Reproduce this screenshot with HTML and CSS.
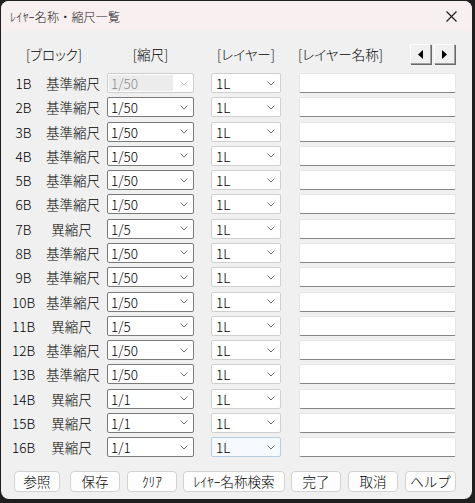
FILE: index.html
```html
<!DOCTYPE html>
<html lang="ja">
<head>
<meta charset="utf-8">
<title>レイヤー名称・縮尺一覧</title>
<link rel="stylesheet" href="styles.css">
</head>
<body>
<div class="win">
  <div class="titlebar">
    <span class="title">ﾚｲﾔｰ名称・縮尺一覧</span>
    <span class="close"><svg width="11" height="11" viewBox="0 0 11 11"><path d="M0.5 0.5 L10.5 10.5 M10.5 0.5 L0.5 10.5" stroke="#1a1a1a" stroke-width="1.1" fill="none"/></svg></span>
  </div>
  <div class="content">
    <div class="hdr">
      <div class="h-block">[ブロック]</div>
      <div class="h-scale">[縮尺]</div>
      <div class="h-layer">[レイヤー]</div>
      <div class="h-name">[レイヤー名称]</div>
      <div class="arrows">
        <div class="abtn"><svg width="5" height="9" viewBox="0 0 5 9"><path d="M5 0 L0 4.5 L5 9 Z" fill="#000"/></svg></div>
        <div class="abtn"><svg width="5" height="9" viewBox="0 0 5 9"><path d="M0 0 L5 4.5 L0 9 Z" fill="#000"/></svg></div>
      </div>
    </div>
    <div class="rows">
      <div class="row"><div class="c-block">1B</div><div class="c-type">基準縮尺</div><div class="sel scale disabled"><span class="val">1/50</span><svg class="chev" width="8" height="5" viewBox="0 0 8 5"><path d="M0.5 0.5 L4 4 L7.5 0.5" stroke="#c4c4c4" fill="none"/></svg></div><div class="sel layer"><span class="val">1L</span><svg class="chev" width="8" height="5" viewBox="0 0 8 5"><path d="M0.5 0.5 L4 4 L7.5 0.5" stroke="#6e6e6e" fill="none"/></svg></div><div class="txt"></div></div>
      <div class="row"><div class="c-block">2B</div><div class="c-type">基準縮尺</div><div class="sel scale"><span class="val">1/50</span><svg class="chev" width="8" height="5" viewBox="0 0 8 5"><path d="M0.5 0.5 L4 4 L7.5 0.5" stroke="#6e6e6e" fill="none"/></svg></div><div class="sel layer"><span class="val">1L</span><svg class="chev" width="8" height="5" viewBox="0 0 8 5"><path d="M0.5 0.5 L4 4 L7.5 0.5" stroke="#6e6e6e" fill="none"/></svg></div><div class="txt"></div></div>
      <div class="row"><div class="c-block">3B</div><div class="c-type">基準縮尺</div><div class="sel scale"><span class="val">1/50</span><svg class="chev" width="8" height="5" viewBox="0 0 8 5"><path d="M0.5 0.5 L4 4 L7.5 0.5" stroke="#6e6e6e" fill="none"/></svg></div><div class="sel layer"><span class="val">1L</span><svg class="chev" width="8" height="5" viewBox="0 0 8 5"><path d="M0.5 0.5 L4 4 L7.5 0.5" stroke="#6e6e6e" fill="none"/></svg></div><div class="txt"></div></div>
      <div class="row"><div class="c-block">4B</div><div class="c-type">基準縮尺</div><div class="sel scale"><span class="val">1/50</span><svg class="chev" width="8" height="5" viewBox="0 0 8 5"><path d="M0.5 0.5 L4 4 L7.5 0.5" stroke="#6e6e6e" fill="none"/></svg></div><div class="sel layer"><span class="val">1L</span><svg class="chev" width="8" height="5" viewBox="0 0 8 5"><path d="M0.5 0.5 L4 4 L7.5 0.5" stroke="#6e6e6e" fill="none"/></svg></div><div class="txt"></div></div>
      <div class="row"><div class="c-block">5B</div><div class="c-type">基準縮尺</div><div class="sel scale"><span class="val">1/50</span><svg class="chev" width="8" height="5" viewBox="0 0 8 5"><path d="M0.5 0.5 L4 4 L7.5 0.5" stroke="#6e6e6e" fill="none"/></svg></div><div class="sel layer"><span class="val">1L</span><svg class="chev" width="8" height="5" viewBox="0 0 8 5"><path d="M0.5 0.5 L4 4 L7.5 0.5" stroke="#6e6e6e" fill="none"/></svg></div><div class="txt"></div></div>
      <div class="row"><div class="c-block">6B</div><div class="c-type">基準縮尺</div><div class="sel scale"><span class="val">1/50</span><svg class="chev" width="8" height="5" viewBox="0 0 8 5"><path d="M0.5 0.5 L4 4 L7.5 0.5" stroke="#6e6e6e" fill="none"/></svg></div><div class="sel layer"><span class="val">1L</span><svg class="chev" width="8" height="5" viewBox="0 0 8 5"><path d="M0.5 0.5 L4 4 L7.5 0.5" stroke="#6e6e6e" fill="none"/></svg></div><div class="txt"></div></div>
      <div class="row"><div class="c-block">7B</div><div class="c-type">異縮尺</div><div class="sel scale"><span class="val">1/5</span><svg class="chev" width="8" height="5" viewBox="0 0 8 5"><path d="M0.5 0.5 L4 4 L7.5 0.5" stroke="#6e6e6e" fill="none"/></svg></div><div class="sel layer"><span class="val">1L</span><svg class="chev" width="8" height="5" viewBox="0 0 8 5"><path d="M0.5 0.5 L4 4 L7.5 0.5" stroke="#6e6e6e" fill="none"/></svg></div><div class="txt"></div></div>
      <div class="row"><div class="c-block">8B</div><div class="c-type">基準縮尺</div><div class="sel scale"><span class="val">1/50</span><svg class="chev" width="8" height="5" viewBox="0 0 8 5"><path d="M0.5 0.5 L4 4 L7.5 0.5" stroke="#6e6e6e" fill="none"/></svg></div><div class="sel layer"><span class="val">1L</span><svg class="chev" width="8" height="5" viewBox="0 0 8 5"><path d="M0.5 0.5 L4 4 L7.5 0.5" stroke="#6e6e6e" fill="none"/></svg></div><div class="txt"></div></div>
      <div class="row"><div class="c-block">9B</div><div class="c-type">基準縮尺</div><div class="sel scale"><span class="val">1/50</span><svg class="chev" width="8" height="5" viewBox="0 0 8 5"><path d="M0.5 0.5 L4 4 L7.5 0.5" stroke="#6e6e6e" fill="none"/></svg></div><div class="sel layer"><span class="val">1L</span><svg class="chev" width="8" height="5" viewBox="0 0 8 5"><path d="M0.5 0.5 L4 4 L7.5 0.5" stroke="#6e6e6e" fill="none"/></svg></div><div class="txt"></div></div>
      <div class="row"><div class="c-block">10B</div><div class="c-type">基準縮尺</div><div class="sel scale"><span class="val">1/50</span><svg class="chev" width="8" height="5" viewBox="0 0 8 5"><path d="M0.5 0.5 L4 4 L7.5 0.5" stroke="#6e6e6e" fill="none"/></svg></div><div class="sel layer"><span class="val">1L</span><svg class="chev" width="8" height="5" viewBox="0 0 8 5"><path d="M0.5 0.5 L4 4 L7.5 0.5" stroke="#6e6e6e" fill="none"/></svg></div><div class="txt"></div></div>
      <div class="row"><div class="c-block">11B</div><div class="c-type">異縮尺</div><div class="sel scale"><span class="val">1/5</span><svg class="chev" width="8" height="5" viewBox="0 0 8 5"><path d="M0.5 0.5 L4 4 L7.5 0.5" stroke="#6e6e6e" fill="none"/></svg></div><div class="sel layer"><span class="val">1L</span><svg class="chev" width="8" height="5" viewBox="0 0 8 5"><path d="M0.5 0.5 L4 4 L7.5 0.5" stroke="#6e6e6e" fill="none"/></svg></div><div class="txt"></div></div>
      <div class="row"><div class="c-block">12B</div><div class="c-type">基準縮尺</div><div class="sel scale"><span class="val">1/50</span><svg class="chev" width="8" height="5" viewBox="0 0 8 5"><path d="M0.5 0.5 L4 4 L7.5 0.5" stroke="#6e6e6e" fill="none"/></svg></div><div class="sel layer"><span class="val">1L</span><svg class="chev" width="8" height="5" viewBox="0 0 8 5"><path d="M0.5 0.5 L4 4 L7.5 0.5" stroke="#6e6e6e" fill="none"/></svg></div><div class="txt"></div></div>
      <div class="row"><div class="c-block">13B</div><div class="c-type">基準縮尺</div><div class="sel scale"><span class="val">1/50</span><svg class="chev" width="8" height="5" viewBox="0 0 8 5"><path d="M0.5 0.5 L4 4 L7.5 0.5" stroke="#6e6e6e" fill="none"/></svg></div><div class="sel layer"><span class="val">1L</span><svg class="chev" width="8" height="5" viewBox="0 0 8 5"><path d="M0.5 0.5 L4 4 L7.5 0.5" stroke="#6e6e6e" fill="none"/></svg></div><div class="txt"></div></div>
      <div class="row"><div class="c-block">14B</div><div class="c-type">異縮尺</div><div class="sel scale"><span class="val">1/1</span><svg class="chev" width="8" height="5" viewBox="0 0 8 5"><path d="M0.5 0.5 L4 4 L7.5 0.5" stroke="#6e6e6e" fill="none"/></svg></div><div class="sel layer"><span class="val">1L</span><svg class="chev" width="8" height="5" viewBox="0 0 8 5"><path d="M0.5 0.5 L4 4 L7.5 0.5" stroke="#6e6e6e" fill="none"/></svg></div><div class="txt"></div></div>
      <div class="row"><div class="c-block">15B</div><div class="c-type">異縮尺</div><div class="sel scale"><span class="val">1/1</span><svg class="chev" width="8" height="5" viewBox="0 0 8 5"><path d="M0.5 0.5 L4 4 L7.5 0.5" stroke="#6e6e6e" fill="none"/></svg></div><div class="sel layer"><span class="val">1L</span><svg class="chev" width="8" height="5" viewBox="0 0 8 5"><path d="M0.5 0.5 L4 4 L7.5 0.5" stroke="#6e6e6e" fill="none"/></svg></div><div class="txt"></div></div>
      <div class="row"><div class="c-block">16B</div><div class="c-type">異縮尺</div><div class="sel scale"><span class="val">1/1</span><svg class="chev" width="8" height="5" viewBox="0 0 8 5"><path d="M0.5 0.5 L4 4 L7.5 0.5" stroke="#6e6e6e" fill="none"/></svg></div><div class="sel layer hover"><span class="val">1L</span><svg class="chev" width="8" height="5" viewBox="0 0 8 5"><path d="M0.5 0.5 L4 4 L7.5 0.5" stroke="#6e6e6e" fill="none"/></svg></div><div class="txt"></div></div>
    </div>
    <div class="buttons">
      <div class="btn b1">参照</div>
      <div class="btn b2">保存</div>
      <div class="btn b3">ｸﾘｱ</div>
      <div class="btn b4">ﾚｲﾔｰ名称検索</div>
      <div class="btn b5">完了</div>
      <div class="btn b6">取消</div>
      <div class="btn b7">ヘルプ</div>
    </div>
  </div>
</div>
</body>
</html>
```

FILE: styles.css
```css
html, body {
  margin: 0;
  padding: 0;
}
body {
  background: #1f1f1f;
  width: 475px;
  height: 503px;
  overflow: hidden;
}
.win {
  width: 471px;
  height: 498px;
  margin: 1px 0 0 1px;
  background: #f0f0f0;
  border-radius: 8px;
  overflow: hidden;
  font-family: "Noto Sans CJK JP", "Noto Sans", sans-serif;
  font-weight: 300;
  color: #000;
  font-size: 13.5px;
  font-feature-settings: "palt";
}
.titlebar {
  height: 30px;
  background: #f8eff0;
  display: flex;
  align-items: center;
  justify-content: space-between;
  padding: 0 15px 0 9px;
}
.title {
  font-size: 12px;
  font-feature-settings: normal;
  color: #1a1a1a;
  letter-spacing: 0.2px;
}
.close {
  display: flex;
  align-items: center;
}
.hdr {
  height: 20px;
  margin-top: 13px;
  display: flex;
  align-items: center;
  line-height: 20px;
}
.h-block {
  width: 106px;
  text-align: center;
}
.h-scale {
  width: 87px;
  text-align: center;
}
.h-layer {
  width: 70px;
  margin-left: 17px;
  text-align: center;
}
.h-name {
  margin-left: 17px;
  flex: 1;
}
.arrows {
  display: flex;
  gap: 3px;
  margin-right: 17px;
}
.abtn {
  width: 21px;
  height: 20px;
  box-sizing: border-box;
  background: #f0f0f0;
  border-top: 1px solid #ffffff;
  border-left: 1px solid #ffffff;
  border-right: 1px solid #a0a0a0;
  border-bottom: 1px solid #a0a0a0;
  box-shadow: 1px 1px 0 #696969;
  display: flex;
  align-items: center;
  justify-content: center;
}
.rows {
  margin-top: 7px;
}
.row {
  height: 24.27px;
  display: flex;
  align-items: center;
}
.c-block {
  width: 45px;
  text-align: center;
}
.c-type {
  width: 51px;
  text-align: center;
  white-space: nowrap;
}
.sel {
  height: 20px;
  box-sizing: border-box;
  background: #fff;
  border-radius: 2px;
  display: flex;
  align-items: center;
  justify-content: space-between;
  padding: 0 5px 0 3px;
  line-height: 18px;
}
.sel .val {
  font-size: 13.5px;
}
.scale {
  width: 87px;
  margin-left: 10px;
  border: 1px solid #7a7a7a;
}
.scale.disabled {
  border-color: #cccccc;
  padding-left: 1px;
}
.scale.disabled .val {
  background: #ececec;
  color: #8c8c8c;
  width: 62px;
  padding-left: 2px;
  height: 16px;
  line-height: 16px;
}
.layer {
  width: 70px;
  margin-left: 17px;
  border: 1px solid #cfcfcf;
  padding-left: 4px;
}
.layer.hover {
  background: #f6f9fd;
  border-color: #b9cde2;
}
.txt {
  width: 157px;
  height: 20px;
  box-sizing: border-box;
  margin-left: 18px;
  background: #fff;
  border: 1px solid #e6e6e6;
  border-bottom: 1px solid #858585;
  border-radius: 2px;
}
.buttons {
  display: flex;
  margin-top: 12px;
  padding-left: 13px;
}
.btn {
  height: 21px;
  box-sizing: border-box;
  border: 1px solid #d2d2d2;
  border-radius: 4px;
  background: #fdfdfd;
  display: flex;
  align-items: center;
  justify-content: center;
  font-size: 13.5px;
  font-feature-settings: normal;
  line-height: 19px;
}
.b1 { width: 46px; }
.b2 { width: 50px; margin-left: 10px; }
.b3 { width: 50px; margin-left: 7px; }
.b4 { width: 102px; margin-left: 6px; }
.b5 { width: 50px; margin-left: 6px; }
.b6 { width: 50px; margin-left: 7px; }
.b7 { width: 51px; margin-left: 7px; }
```
